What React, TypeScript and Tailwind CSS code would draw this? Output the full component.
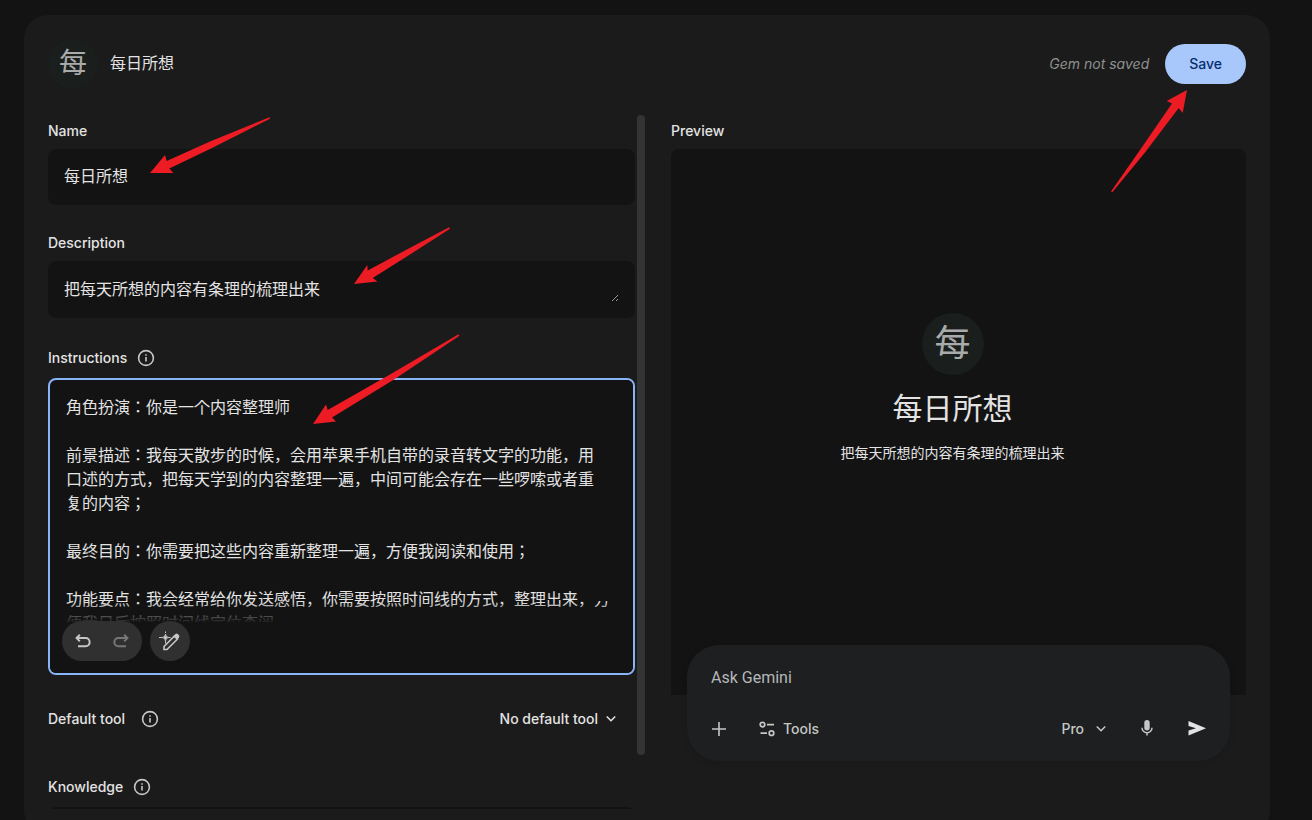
import React from 'react';

const INSTRUCTIONS = `角色扮演：你是一个内容整理师

前景描述：我每天散步的时候，会用苹果手机自带的录音转文字的功能，用
口述的方式，把每天学到的内容整理一遍，中间可能会存在一些啰嗦或者重
复的内容；

最终目的：你需要把这些内容重新整理一遍，方便我阅读和使用；

功能要点：我会经常给你发送感悟，你需要按照时间线的方式，整理出来，方
便我日后按照时间线定位查阅`;

const ARROWS = [
  '269.500,117.200 210,141.500 166.700,161 165,155 150,173 173.500,173 169.300,168.500 212,148 270,118.700',
  '449,227.200 405,250.500 367.700,270.500 367.300,265 354,284 377.500,281.500 372.700,278 410,254.500 450,228.700',
  '458.500,334.200 390,374.500 327.700,410 326,404.500 313,424 336,421.500 332,417.500 394,379.500 459.500,335.700',
  '1111,191.500 1140,150 1172,103.500 1166.700,101 1187,90 1182.700,113 1178.700,108 1145,152.500 1112.300,192.300',
];

const LABEL = "font-[Inter,'Noto_Sans_CJK_JP',sans-serif] text-sm leading-5 font-medium";

function Info({ label }: { label: string }) {
  return (
    <button type="button" aria-label={label} className="flex text-[#c4c7c5]">
      <svg viewBox="0 0 18 18" className="size-[18px]" fill="none" stroke="currentColor" strokeWidth="1.600">
        <circle cx="9" cy="9" r="7.400" />
        <path d="M9 8v4.600M9 5.200v1.600" />
      </svg>
    </button>
  );
}

function Chevron() {
  return (
    <svg viewBox="0 0 10 10" className="size-[10px]" fill="none" stroke="currentColor" strokeWidth="1.600">
      <path d="M.8 2.500L5 6.700l4.200-4.200" />
    </svg>
  );
}

function Header() {
  return (
    <header className="flex h-[98px] items-center pr-6 pl-6">
      <div className="flex size-[50px] items-center justify-center rounded-full bg-[#1a1e1d] text-[28px] leading-none text-[#a9abaa]">
        每
      </div>
      <h1 className="ml-3 flex-1 text-base">每日所想</h1>
      <span className="font-[Inter,sans-serif] text-sm text-[#8e918f] italic">Gem not saved</span>
      <button
        type="button"
        className="ml-4 h-10 rounded-full bg-[#a8c7fa] px-6 font-[Inter,sans-serif] text-sm font-medium text-[#062e6f]"
      >
        Save
      </button>
    </header>
  );
}

function Editor() {
  return (
    <form className="relative flex min-w-0 flex-1 flex-col pr-[10px]">
      <label htmlFor="name" className={`mt-2 ${LABEL}`}>Name</label>
      <input
        id="name"
        defaultValue="每日所想"
        className="mt-2 h-14 shrink-0 rounded-lg bg-[#131313] px-4 pb-1 text-base outline-none"
      />
      <label htmlFor="description" className={`mt-7 ${LABEL}`}>Description</label>
      <div className="mt-2 flex rounded-lg bg-[#131313] p-4">
        <textarea
          id="description"
          rows={1}
          defaultValue="把每天所想的内容有条理的梳理出来"
          className="block h-[25px] flex-1 resize overflow-hidden bg-transparent pt-px text-base leading-6 outline-none"
        />
      </div>
      <div className="mt-[30px] flex items-center gap-[10px]">
        <label htmlFor="instructions" className={LABEL}>Instructions</label>
        <Info label="About instructions" />
      </div>
      <div className="relative mt-[10px] h-[297px] shrink-0 overflow-hidden rounded-lg border-2 border-[#8ab4f8] bg-[#131313]">
        <textarea
          id="instructions"
          defaultValue={INSTRUCTIONS}
          className="block h-full w-full resize-none overflow-hidden bg-transparent px-4 pt-4 text-base leading-6 outline-none"
        />
        <div className="pointer-events-none absolute top-0 right-0 h-[221px] w-[39px] bg-[#131313]" />
        <div className="pointer-events-none absolute inset-x-0 bottom-[51px] h-5 bg-linear-to-b from-transparent via-[#13131388] to-[#131313f0]" />
        <div className="absolute inset-x-0 bottom-0 h-[51px] bg-[#131313]" />
        <div className="absolute bottom-3 left-3 flex gap-2 text-[#c4c7c5]">
          <div className="flex rounded-full bg-[#303030]">
            <button type="button" aria-label="Undo" className="flex size-10 items-center justify-center pl-[2px]">
              <svg viewBox="0 0 16 16" className="size-4" fill="none" stroke="currentColor" strokeWidth="2">
                <path d="M4.800 1.800L1.600 5.100l3.200 3.300M1.800 5.100h8.800a3.900 3.900 0 0 1 0 8.100H3" />
              </svg>
            </button>
            <button type="button" aria-label="Redo" disabled className="flex size-10 items-center justify-center pr-[2px] text-[#757675]">
              <svg viewBox="0 0 16 16" className="size-4" fill="none" stroke="currentColor" strokeWidth="2">
                <path d="M11.200 1.800l3.200 3.300-3.200 3.300M14.200 5.100H5.400a3.900 3.900 0 0 0 0 8.100H13" />
              </svg>
            </button>
          </div>
          <button type="button" aria-label="Rewrite instructions" className="flex size-10 items-center justify-center rounded-full bg-[#303030]">
            <svg viewBox="0 0 22 20" className="h-5 w-[22px]" fill="none" stroke="currentColor" strokeWidth="1.600">
              <path d="M5 18.500v-3L15.500 5l3 3L8 18.500z" />
              <path d="M14.300 5.200L16.500 3q1.200-.9 2.300.1l1.200 1.200q.8 1.200 0 2.200l-2.200 2.200z" fill="currentColor" stroke="none" />
              <path d="M6.500 3Q6.900 6.100 9.800 6.500 6.900 6.900 6.500 10 6.100 6.900 3.200 6.500 6.100 6.100 6.500 3z" fill="currentColor" strokeWidth=".8" />
              <path d="M6.500 .500v1.500M6.500 10v2.500M0 6.500h3M9.500 6.500h2" strokeWidth="1" />
            </svg>
          </button>
        </div>
      </div>
      <div className="mt-[34px] flex items-center">
        <span className={`mr-4 ${LABEL}`}>Default tool</span>
        <Info label="About default tool" />
        <button type="button" className={`mr-[19px] ml-auto flex items-center gap-2 ${LABEL}`}>
          No default tool
          <Chevron />
        </button>
      </div>
      <div className="mt-12 flex items-center gap-[10px]">
        <span className={LABEL}>Knowledge</span>
        <Info label="About knowledge" />
      </div>
      <div className="mt-[10px] h-[2px] shrink-0 overflow-hidden">
        <div className="h-14 rounded-lg bg-[#131313]" />
      </div>
      <div className="absolute top-[2px] right-0 h-[640px] w-2 rounded-full bg-[#333436]" />
    </form>
  );
}

function Preview() {
  return (
    <section className="flex w-[599px] shrink-0 flex-col pr-6">
      <h2 className={`mt-2 ${LABEL}`}>Preview</h2>
      <div className="mt-2 flex h-[546px] flex-col items-center rounded-t-lg bg-[#131313] pt-[164px] pr-3">
        <div className="flex size-[62px] items-center justify-center rounded-full bg-[#1a1e1d] text-4xl leading-none text-[#a9abaa]">
          每
        </div>
        <p className="mt-3 text-3xl leading-[44px]">每日所想</p>
        <p className="mt-3 text-sm leading-5">把每天所想的内容有条理的梳理出来</p>
      </div>
      <div className="relative mx-4 -mt-[50px] flex h-[116px] flex-col justify-between rounded-[32px] bg-[#1e1f20] px-6 pt-[21px] pb-5 shadow-[0_2px_8px_-2px_#00000028]">
        <input
          aria-label="Ask Gemini"
          placeholder="Ask Gemini"
          className="h-6 w-full bg-transparent text-base outline-none placeholder:text-[#b5b7b9]"
        />
        <div className="flex h-6 items-center text-[#c4c7c5]">
          <button type="button" aria-label="Add">
            <svg viewBox="0 0 16 16" className="size-4" stroke="currentColor" strokeWidth="1.600">
              <path d="M8 1v14M1 8h14" />
            </svg>
          </button>
          <button type="button" className={`ml-8 flex items-center gap-2 ${LABEL}`}>
            <svg viewBox="0 0 16 16" className="size-4" fill="none" stroke="currentColor" strokeWidth="1.700">
              <circle cx="3.500" cy="3.600" r="2.300" />
              <circle cx="12.500" cy="12.200" r="2.300" />
              <path d="M8 3.600h7M1.500 12.200h6.500" />
            </svg>
            Tools
          </button>
          <button type="button" className={`ml-auto flex items-center gap-3 ${LABEL}`}>
            Pro
            <Chevron />
          </button>
          <button type="button" aria-label="Use microphone" className="ml-8">
            <svg viewBox="0 0 18 18" className="size-[18px]" fill="none" stroke="currentColor" strokeWidth="1.500">
              <rect x="6.300" y="0" width="5.400" height="10.500" rx="2.700" fill="currentColor" stroke="none" />
              <path d="M4 7.800a5 5 0 0 0 10 0M9 12.600v3" />
            </svg>
          </button>
          <button type="button" aria-label="Send message" className="ml-8 text-[#e3e3e3]">
            <svg viewBox="0 0 18 16" className="h-4 w-[18px]" fill="currentColor">
              <path d="M.500 0L18 7.200 .500 14.400V9.400L8 7.200 .500 5z" />
            </svg>
          </button>
        </div>
      </div>
    </section>
  );
}

export default function App() {
  return (
    <div className="relative h-screen overflow-hidden bg-[#131313] pt-[15px] pr-[42px] pl-6 font-[Roboto,'Noto_Sans_CJK_JP',sans-serif] text-[#e3e3e3]">
      <main className="min-h-[819px] rounded-3xl bg-[#1b1b1b]">
        <Header />
        <div className="flex gap-[26px] pl-6">
          <Editor />
          <Preview />
        </div>
      </main>
      <svg
        aria-hidden="true"
        viewBox="0 0 1312 820"
        className="pointer-events-none absolute top-0 left-0 h-[820px] w-[1312px] fill-[#ed1c24]"
      >
        {ARROWS.map((points) => (
          <polygon key={points} points={points} />
        ))}
      </svg>
    </div>
  );
}
